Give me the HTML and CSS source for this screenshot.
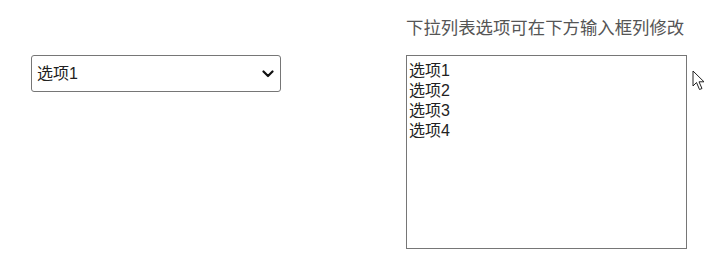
FILE: index.html
```html
<!DOCTYPE html>
<html lang="zh-CN">
<head>
    <meta charset="UTF-8">
    <title>下拉列表</title>
    <link rel="stylesheet" href="styles.css">
</head>
<body>
    <div class="page">
        <div class="hint">下拉列表选项可在下方输入框列修改</div>
        <div class="select-wrap">
            <select class="option-select">
                <option>选项1</option>
                <option>选项2</option>
                <option>选项3</option>
                <option>选项4</option>
            </select>
            <svg class="chevron" width="12" height="8" viewBox="0 0 12 8">
                <path d="M1.5 1.5 L6 6 L10.5 1.5" fill="none" stroke="#111" stroke-width="2.2" stroke-linecap="round" stroke-linejoin="round"/>
            </svg>
        </div>
        <div class="editor">
            <textarea class="option-list">选项1
选项2
选项3
选项4</textarea>
            <svg class="pointer" width="14" height="21" viewBox="0 0 14 21">
                <path d="M1 1 L1 16 L4.5 12.5 L7.5 19.5 L10 18.5 L7 11.8 L12 11.8 Z" fill="#fff" stroke="#222" stroke-width="1" stroke-linejoin="round"/>
            </svg>
        </div>
    </div>
</body>
</html>
```

FILE: styles.css
```css
* {
    margin: 0;
    padding: 0;
    box-sizing: border-box;
}

body {
    background: #fff;
    font-family: 'Liberation Sans', 'Noto Sans CJK SC', sans-serif;
    color: #222;
}

.page {
    display: grid;
    grid-template-columns: 250px 281px;
    column-gap: 125px;
    padding: 16px 0 0 31px;
}

.hint {
    grid-column: 2;
    font-size: 17.4px;
    line-height: 25px;
    color: #555;
    margin-bottom: 14px;
}

.select-wrap {
    grid-column: 1;
    grid-row: 2;
    position: relative;
    align-self: start;
}

.option-select {
    appearance: none;
    -webkit-appearance: none;
    width: 250px;
    height: 37px;
    border: 1px solid #767676;
    border-radius: 3px;
    background: #fff;
    font-family: inherit;
    font-size: 16px;
    color: #222;
    padding: 0 0 0 5px;
    outline: none;
}

.chevron {
    position: absolute;
    right: 7px;
    top: 15px;
    pointer-events: none;
}

.editor {
    grid-column: 2;
    grid-row: 2;
    position: relative;
}

.option-list {
    display: block;
    width: 281px;
    height: 194px;
    border: 1px solid #767676;
    font-family: inherit;
    font-size: 16px;
    line-height: 20px;
    color: #222;
    padding: 5px 2px;
    resize: none;
    outline: none;
}

.pointer {
    position: absolute;
    left: 286px;
    top: 15px;
}
```
